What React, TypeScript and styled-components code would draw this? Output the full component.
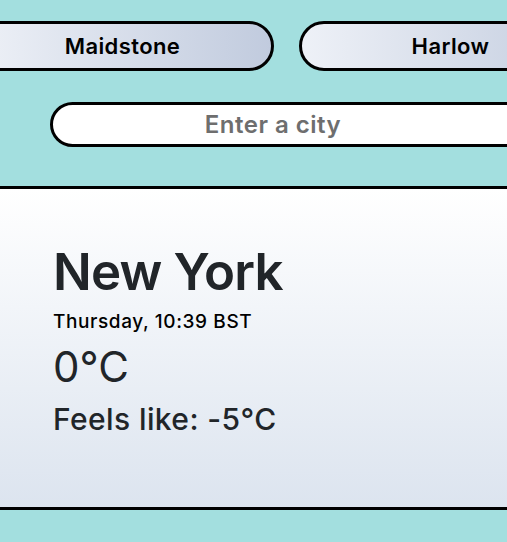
import React from "react";
import styled, { createGlobalStyle } from "styled-components";

const GlobalStyle = createGlobalStyle`
  html, body {
    margin: 0;
    padding: 0;
    overflow: hidden;
    background: #a3dfdf;
  }
  * { box-sizing: border-box; }
  body {
    font-family: Inter, "Noto Sans", "Liberation Sans", sans-serif;
  }
`;

const Page = styled.div`
  width: 507px;
  min-height: 542px;
  background: #a3dfdf;
  overflow: hidden;
`;

const Header = styled.header`
  display: flex;
  flex-direction: column;
  padding: 21px 0 39px;
`;

const CityRow = styled.nav`
  display: flex;
  gap: 25px;
  margin-left: -29px;
`;

const CityButton = styled.button`
  flex-shrink: 0;
  width: 303px;
  height: 50px;
  border: 3px solid #000;
  border-radius: 25px;
  background: linear-gradient(to right, #eef1f7, #c1cbde);
  font-family: Inter, "Noto Sans", sans-serif;
  font-size: 22px;
  font-weight: 600;
  letter-spacing: 0.4px;
  color: #000;
  padding: 0;
  cursor: pointer;
`;

const SearchRow = styled.div`
  display: flex;
  margin-top: 31px;
  padding-left: 50px;
`;

const SearchInput = styled.input`
  flex-shrink: 0;
  width: 600px;
  height: 45px;
  border: 3px solid #000;
  border-radius: 23px;
  background: #fff;
  padding: 0 154px 0 0;
  text-align: center;
  font-family: Inter, "Noto Sans", sans-serif;
  font-size: 24px;
  font-weight: 600;
  letter-spacing: 0.5px;
  color: #333;
  outline: none;
  &::placeholder {
    color: #6e6e6e;
    opacity: 1;
  }
`;

const Panel = styled.main`
  height: 324px;
  border-top: 3px solid #000;
  border-bottom: 3px solid #000;
  background: linear-gradient(to bottom, #ffffff, #dce4ef);
  padding: 52px 53px 0;
  display: flex;
  flex-direction: column;
`;

const CityName = styled.h1`
  margin: 0;
  font-size: 51px;
  line-height: 1.2;
  font-weight: 600;
  color: #212529;
  letter-spacing: -0.8px;
`;

const DateLine = styled.div`
  margin-top: 9px;
  font-size: 19px;
  line-height: 1.2;
  font-weight: 500;
  letter-spacing: 0.6px;
  color: #000;
`;

const Temp = styled.div`
  margin-top: 8px;
  font-size: 42px;
  line-height: 1.2;
  font-weight: 400;
  color: #212529;
`;

const Feels = styled.div`
  margin-top: 9px;
  font-size: 30px;
  line-height: 1.2;
  font-weight: 500;
  letter-spacing: 0.4px;
  color: #212529;
`;

export default function App() {
  return (
    <Page>
      <GlobalStyle />
      <Header>
        <CityRow>
          <CityButton>Maidstone</CityButton>
          <CityButton>Harlow</CityButton>
        </CityRow>
        <SearchRow>
          <SearchInput placeholder="Enter a city" />
        </SearchRow>
      </Header>
      <Panel>
        <CityName>New York</CityName>
        <DateLine>Thursday, 10:39 BST</DateLine>
        <Temp>0°C</Temp>
        <Feels>Feels like: -5°C</Feels>
      </Panel>
    </Page>
  );
}
